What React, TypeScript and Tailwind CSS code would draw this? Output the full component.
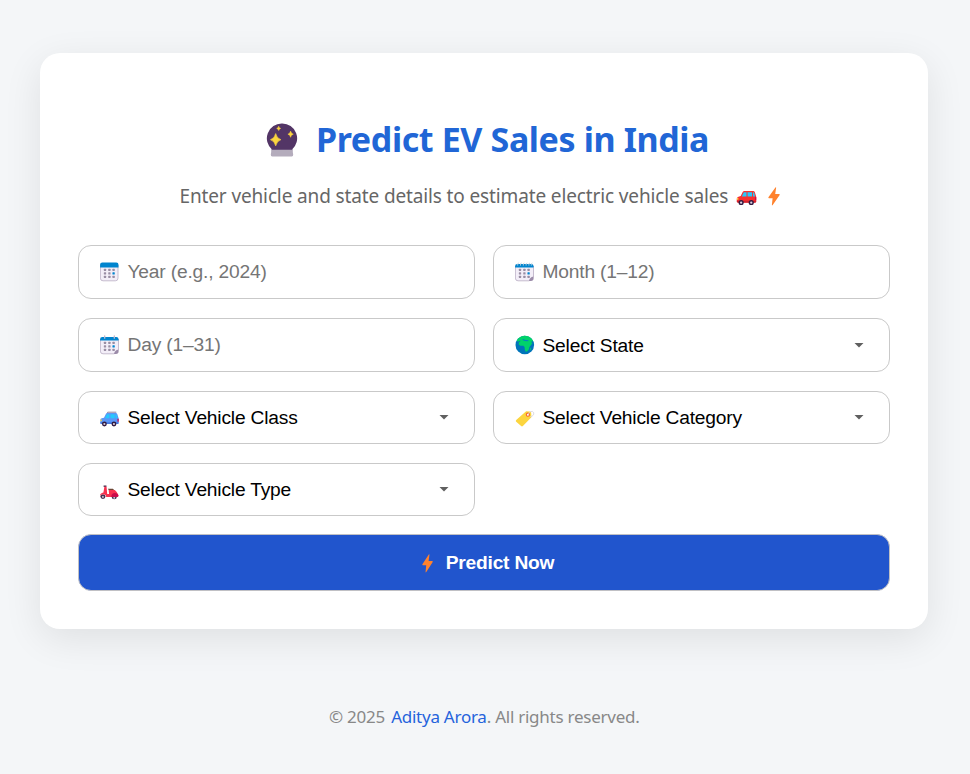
import React from "react";

function CrystalBall() {
  return (
    <svg width="32" height="34" viewBox="0 0 32 34" className="mt-[2px] shrink-0">
      <path d="M5.2 26H26.8V29L27.2 31.5Q27.3 33.5 25.8 33.5H6.2Q4.7 33.5 4.8 31.5L5.2 29Z" fill="#b4acbc" />
      <path d="M16 .6A14.8 14.8 0 0 1 25.9 26.7H6.1A14.8 14.8 0 0 1 16 .6Z" fill="#533566" />
      <path d="M9.7 10.6Q10.7 15.4 14.9 16.7Q10.7 18 9.7 22.8Q8.7 18 4.5 16.7Q8.7 15.4 9.7 10.6Z" fill="#fcd53f" stroke="#fcd53f" strokeWidth=".7" />
      <path d="M24.6 8.1Q25 10.6 27.3 11.2Q25 11.8 24.6 14.3Q24.2 11.8 21.9 11.2Q24.2 10.6 24.6 8.1Z" fill="#fcd53f" stroke="#fcd53f" strokeWidth=".5" />
      <path d="M12.7 3.2Q13.1 5 14.7 5.4Q13.1 5.8 12.7 7.6Q12.3 5.8 10.7 5.4Q12.3 5 12.7 3.2Z" fill="#fcd53f" stroke="#fcd53f" strokeWidth=".5" />
    </svg>
  );
}

function Bolt({ className }: { className: string }) {
  return (
    <svg viewBox="0 0 12 19" preserveAspectRatio="none" className={className}>
      <path d="M7.4.5Q8.3-.2 8.1.9L7.2 7.1H11.1Q12.2 7.2 11.5 8.3L4.7 18.1Q3.8 19.1 3.9 17.8L4.6 11.3H1Q-.1 11.2.6 10.1Z" fill="#ff822d" />
    </svg>
  );
}

function CarBody({ body, shade, rack }: { body: string; shade: string; rack: boolean }) {
  return (
    <>
      {rack && <path d="M7.5 2.1L8.2.6H17" fill="none" stroke="#8b7c98" strokeWidth="1" />}
      <path d="M8 1.4H16.4Q17.6 1.4 18.1 2.6L19.4 6.9V11.3Q19.4 12.6 18.1 12.6H2Q.6 12.6.6 11.2V8.6Q.7 7.3 2.2 6.9L4.4 6.4L6.3 2.4Q6.8 1.4 8 1.4Z" fill={body} />
      <path d="M.6 10.8H19.4V11.6Q19.2 12.8 18 12.8H2Q.7 12.8.6 11.6Z" fill={shade} />
      <path d="M7.4 2.6H10V6.8H5.5ZM11 2.6H15.4V6.8H11ZM16.3 2.6L17.3 3L18.3 6.8H16.3Z" fill="#26c9fc" />
      <path d="M.8 8.2H2.1V10H.7Z" fill="#fcd53f" />
      <path d="M18.2 7.4H19.5V10.4H18.2Z" fill="#ca0b4a" />
      <circle cx="4.8" cy="12.7" r="2.5" fill="#321b41" />
      <circle cx="14.6" cy="12.7" r="2.5" fill="#321b41" />
      <circle cx="4.8" cy="12.7" r="1.1" fill="#d8cede" />
      <circle cx="14.6" cy="12.7" r="1.1" fill="#d8cede" />
    </>
  );
}

function RedCar() {
  return (
    <svg width="21" height="16" viewBox="0 -0.5 20 15.5" className="mt-[2px] shrink-0">
      <CarBody body="#f8312f" shade="#d3222e" rack={false} />
    </svg>
  );
}

function BlueCar() {
  return (
    <svg width="20" height="20" viewBox="0.3 -3.7 20.5 20.5" className="shrink-0">
      <CarBody body="#5b96f7" shade="#4679df" rack={true} />
    </svg>
  );
}

function CalendarIcon({ kind }: { kind: "plain" | "spiral" | "tearoff" }) {
  const top = kind === "plain" ? 0.6 : 2;
  return (
    <svg width="20" height="20" viewBox="0.3 0 20 20" className="shrink-0">
      <path
        d={
          kind === "plain"
            ? "M.7 3H18.3V16.2Q18.3 18.8 15.7 18.8H3.3Q.7 18.8.7 16.2Z"
            : "M.7 4H18.8V14.5L14.6 18.8H3.3Q.7 18.8.7 16.2Z"
        }
        fill="#f3eef8"
        stroke="#b9adc4"
        strokeWidth=".8"
      />
      <path d={`M.4 5.4V${top + 2.2}Q.4 ${top} 2.6 ${top}H16.6Q18.8 ${top} 18.8 ${top + 2.2}V5.4Z`} fill="#0084ce" />
      {kind !== "plain" && <path d="M18.9 14.4V16.2Q18.9 18.9 16.2 18.9H14.4Q14.8 15 18.9 14.4Z" fill="#9b8ba9" />}
      {kind === "spiral" && <path d="M5 .8V3.2M14.6 .8V3.2" stroke="#c4b9cc" strokeWidth="1.3" strokeLinecap="round" />}
      {kind === "tearoff" && (
        <path d="M3 3.6Q2.6 1 4.1 1M5.8 3.6Q5.4 1 6.9 1M8.6 3.6Q8.2 1 9.7 1M11.4 3.6Q11 1 12.5 1M14.2 3.6Q13.8 1 15.3 1M16.6 3.6Q16.2 1 17.6 1" fill="none" stroke="#b9cfe0" strokeWidth=".9" />
      )}
      {[7.9, 11.4, 14.9].map((y) =>
        [5.3, 9.7, 13.9].map((x) => (
          <rect
            key={`${x}-${y}`}
            x={x - 1.15}
            y={y - 1.15}
            width="2.3"
            height="2.3"
            rx=".5"
            fill={x === 13.9 && y === 11.4 ? "#0084ce" : "#998ea4"}
          />
        )),
      )}
    </svg>
  );
}

function Globe() {
  return (
    <svg width="20" height="20" viewBox="0 0 20 20" className="shrink-0">
      <circle cx="9.8" cy="10" r="9.3" fill="#0074ba" />
      <path d="M1.6 5.6A9.3 9.3 0 0 1 17.3 4.5L18.4 6.7L17 6.1L16.3 7.3L17.4 8.1L15.9 10.3L14.4 12.1L13.9 14.3L12.2 16.3L10.7 16.7L9.8 14.4L9.6 12L8.3 10.8H5.4L3.7 9.4L3.9 7.4L5.7 5.7L4.2 5.9L3.1 6.8Z" fill="#00d26a" />
      <path d="M7.2 4.7L9 4.1L9.8 5.1L12.1 5L14 5.8L12.7 6.2L9.8 6L8.4 5.5Z" fill="#0083bf" />
      <path d="M15.2 13.6L16.2 12.3L15.9 14.6L15 15.3Z" fill="#00d26a" />
    </svg>
  );
}

function Tag() {
  return (
    <svg width="20" height="20" viewBox="-0.3 -1 20 20" className="shrink-0">
      <path d="M10.8 2.3L14.6 2.6Q15.8 2.8 15.9 4L16.1 8.2L7.6 17.1Q6.7 17.9 5.8 17.1L.9 12.8Q0 11.9.9 11Z" fill="#fcd53f" />
      <circle cx="12.6" cy="5.7" r="2.1" fill="#f8672f" />
      <circle cx="12.6" cy="5.7" r="1" fill="#fff" />
      <path d="M12.7 5.5Q14 1.9 17 2.4Q19.4 3.4 18.2 5.8Q16.8 8 14.7 7.5" fill="none" stroke="#d4cfda" strokeWidth=".8" />
    </svg>
  );
}

function Scooter() {
  return (
    <svg width="20" height="20" viewBox="0.3 -2.2 20.5 20.5" className="shrink-0">
      <g transform="translate(0 1.4) scale(1 .92)">
        <circle cx="3.3" cy="14.6" r="2.6" fill="#46304f" />
        <circle cx="14.9" cy="14.9" r="2.6" fill="#46304f" />
        <circle cx="3.3" cy="15" r="1" fill="#d8cede" />
        <circle cx="14.9" cy="15.9" r="1" fill="#d8cede" />
        <path d="M4 2.2H6.9V3.8H4Z" fill="#46304f" />
        <path d="M4.8 3.5H7L7.7 11.6H9.6L9.2 7.2H15.5Q18.4 9.7 19.2 13.2Q19.3 15 17.6 15H6.7L5.9 12.9Q3.4 10.8.4 13.6Q.3 10.8 3.8 10Z" fill="#f8314f" />
        <path d="M11.8 15Q12 10.8 15.5 10.6Q19 11 19.2 13.6Q19.2 15 17.6 15Z" fill="#ca0b4a" />
        <path d="M8.4 5.7H13.5L14.8 7.3H9.2Z" fill="#6d4534" />
      </g>
    </svg>
  );
}

function Input({ icon, label }: { icon: React.ReactNode; label: string }) {
  return (
    <div className="flex h-[54px] items-center gap-2 rounded-[13px] border border-[#c9c9c9] bg-white pl-[20.5px] text-[19.2px] text-[#757575]">
      {icon}
      <span className="whitespace-nowrap leading-6 tracking-[-0.18px]">{label}</span>
    </div>
  );
}

function Select({ icon, label, height = "h-[53px]" }: { icon: React.ReactNode; label: string; height?: string }) {
  return (
    <div className={`flex ${height} items-center gap-2 rounded-[13px] border border-[#c9c9c9] bg-white pr-[25px] pl-[20.5px] text-[19.2px] text-black`}>
      {icon}
      <span className={`whitespace-nowrap leading-6 tracking-[-0.19px] ${height === "h-[54px]" ? "pt-[2px]" : ""}`}>{label}</span>
      <svg width="10" height="5" viewBox="0 0 10 5" className="ml-auto">
        <path d="M.5 0H9.5L5 4.6Z" fill="#606060" />
      </svg>
    </div>
  );
}

export default function App() {
  return (
    <div className="flex h-[774px] w-[970px] flex-col items-start overflow-hidden bg-[#f4f6f8] pt-[53px] font-['Noto_Sans',sans-serif]">
      <main className="ml-10 h-[576px] w-[888px] rounded-[20px] bg-white px-[38px] pt-[61px] shadow-[0_10px_38px_rgba(0,0,0,0.09)]">
        <h1 className="ml-[188px] flex h-[50px] items-center gap-[18px] text-[34px] leading-[50px] font-bold text-[#2166d6]">
          <CrystalBall />
          <span className="whitespace-nowrap tracking-[-0.38px]">Predict EV Sales in India</span>
        </h1>
        <p className="mt-[18px] ml-[101.5px] flex h-[28px] items-center text-[19px] leading-7 text-[#666]">
          <span className="w-[556.5px] whitespace-nowrap tracking-[-0.13px]">Enter vehicle and state details to estimate electric vehicle sales</span>
          <RedCar />
          <Bolt className="ml-[11px] h-[19px] w-3" />
        </p>
        <form className="mt-[35px] font-['Liberation_Sans',Arial,sans-serif]">
          <div className="grid grid-cols-2 gap-x-[18px] gap-y-[19px]">
            <Input icon={<CalendarIcon kind="plain" />} label="Year (e.g., 2024)" />
            <Input icon={<CalendarIcon kind="tearoff" />} label="Month (1–12)" />
            <Input icon={<CalendarIcon kind="spiral" />} label="Day (1–31)" />
            <Select icon={<Globe />} label="Select State" height="h-[54px]" />
            <Select icon={<BlueCar />} label="Select Vehicle Class" />
            <Select icon={<Tag />} label="Select Vehicle Category" />
            <Select icon={<Scooter />} label="Select Vehicle Type" />
          </div>
          <button type="button" className="mt-[18px] flex h-[57px] w-full items-center justify-center rounded-[13px] border border-[#c0c0c4] bg-[#2155cd] pt-[2px] pl-[8px] text-[19.2px] font-bold text-white">
            <Bolt className="mr-[13px] h-[19px] w-[11px]" />
            <span className="tracking-[-0.2px]">Predict Now</span>
          </button>
        </form>
      </main>
      <footer className="mt-[75px] ml-[329px] text-[17px] leading-[26px] whitespace-nowrap tracking-[-0.25px] text-[#888]">
        © 2025 <a className="ml-[2px] text-[#2563dc]">Aditya Arora</a>. All rights reserved.
      </footer>
    </div>
  );
}
